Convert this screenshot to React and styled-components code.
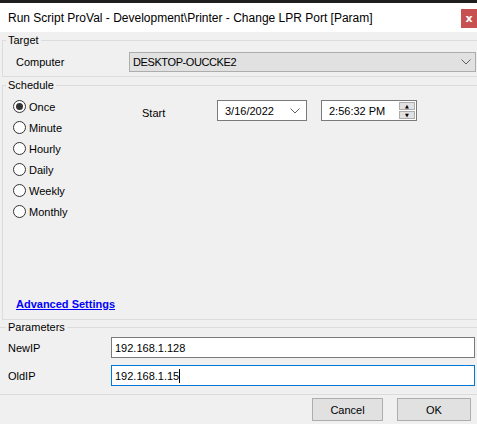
import styled, { createGlobalStyle } from "styled-components";

const GlobalStyle = createGlobalStyle`
  html, body {
    margin: 0;
    padding: 0;
    background: #f0f0f0;
  }
  body {
    font-family: "Liberation Sans", Arial, sans-serif;
    font-size: 11px;
    color: #000;
  }
`;

const radios = ["Once", "Minute", "Hourly", "Daily", "Weekly", "Monthly"];

function Chevron() {
  return (
    <svg width="10" height="6" viewBox="0 0 10 6">
      <polyline points="0.5,0.5 5,5 9.5,0.5" fill="none" stroke="#606060" strokeWidth="1" />
    </svg>
  );
}

export default function App() {
  return (
    <Window>
      <GlobalStyle />
      <TitleBar>
        <Title>Run Script ProVal - Development\Printer - Change LPR Port [Param]</Title>
        <CloseButton>x</CloseButton>
      </TitleBar>

      <Group>
        <Legend>Target</Legend>
        <TargetRow>
          <TargetLabel>Computer</TargetLabel>
          <Combo>
            <ComboText>DESKTOP-OUCCKE2</ComboText>
            <Chevron />
          </Combo>
        </TargetRow>
      </Group>

      <Group>
        <Legend>Schedule</Legend>
        <ScheduleBody>
          <ScheduleTop>
            <RadioList>
              {radios.map((r, i) => (
                <RadioRow key={r}>
                  <RadioCircle $checked={i === 0} />
                  <span>{r}</span>
                </RadioRow>
              ))}
            </RadioList>
            <StartLabel>Start</StartLabel>
            <DateBox>
              <span>3/16/2022</span>
              <Chevron />
            </DateBox>
            <TimeBox>
              <span>2:56:32 PM</span>
              <Spinner>
                <SpinHalf>▲</SpinHalf>
                <SpinHalf>▼</SpinHalf>
              </Spinner>
            </TimeBox>
          </ScheduleTop>
          <AdvancedLink href="#">Advanced Settings</AdvancedLink>
        </ScheduleBody>
      </Group>

      <Group $flat>
        <Legend $flat>Parameters</Legend>
        <ParamList>
          <ParamRow>
            <ParamLabel>NewIP</ParamLabel>
            <TextBox>192.168.1.128</TextBox>
          </ParamRow>
          <ParamRow>
            <ParamLabel>OldIP</ParamLabel>
            <TextBox $focused>
              192.168.1.15
              <Caret />
            </TextBox>
          </ParamRow>
        </ParamList>
      </Group>

      <ButtonRow>
        <Button $w={71}>Cancel</Button>
        <Button $w={74}>OK</Button>
      </ButtonRow>
    </Window>
  );
}

const Window = styled.div`
  width: 477px;
  height: 424px;
  overflow: hidden;
  background: #f0f0f0;
  display: flex;
  flex-direction: column;
`;

const TitleBar = styled.div`
  height: 29px;
  border-top: 3px solid #1f1f1f;
  background: #fff;
  display: flex;
  align-items: center;
  justify-content: space-between;
  padding-left: 8px;
`;

const Title = styled.div`
  font-size: 12px;
  white-space: nowrap;
`;

const CloseButton = styled.div`
  width: 16px;
  height: 19px;
  margin-top: 2px;
  background: #c75050;
  color: #fff;
  font-family: "DejaVu Sans", sans-serif;
  font-weight: bold;
  font-size: 11px;
  display: flex;
  align-items: center;
  justify-content: center;
`;

const Group = styled.fieldset`
  margin: ${(p) => (p.$flat ? "-1px 0 0 0" : "0 0 0 2px")};
  padding: 0;
  min-width: 0;
  border: 1px solid #dcdcdc;
  border-right: none;
  border-left: ${(p) => (p.$flat ? "none" : "1px solid #dcdcdc")};
`;

const Legend = styled.legend`
  padding: 0 2px;
  margin-left: ${(p) => (p.$flat ? "6px" : "3px")};
  line-height: 16px;
  font-size: 11px;
`;

const TargetRow = styled.div`
  display: flex;
  align-items: center;
  padding: 4px 1px 4px 13px;
`;

const TargetLabel = styled.div`
  width: 113px;
`;

const Combo = styled.div`
  flex: 1;
  height: 20px;
  box-sizing: border-box;
  border: 1px solid #adadad;
  background: #e1e1e1;
  display: flex;
  align-items: center;
  justify-content: space-between;
  padding: 0 4px 0 3px;
`;

const ComboText = styled.span`
  letter-spacing: -0.4px;
`;

const ScheduleBody = styled.div`
  height: 226px;
  display: flex;
  flex-direction: column;
  justify-content: space-between;
`;

const ScheduleTop = styled.div`
  display: flex;
  align-items: flex-start;
`;

const RadioList = styled.div`
  width: 129px;
  padding: 3px 0 0 10px;
  display: flex;
  flex-direction: column;
`;

const RadioRow = styled.div`
  height: 21px;
  display: flex;
  align-items: center;
  gap: 3px;
`;

const RadioCircle = styled.span`
  width: 13px;
  height: 13px;
  box-sizing: border-box;
  border: 1px solid #333;
  border-radius: 50%;
  background: #fff;
  display: flex;
  align-items: center;
  justify-content: center;

  &::after {
    content: "";
    display: ${(p) => (p.$checked ? "block" : "none")};
    width: 7px;
    height: 7px;
    border-radius: 50%;
    background: #333;
  }
`;

const StartLabel = styled.div`
  width: 75px;
  margin-top: 14px;
`;

const DateBox = styled.div`
  width: 90px;
  height: 21px;
  margin-top: 7px;
  box-sizing: border-box;
  border: 1px solid #7a7a7a;
  background: #fff;
  display: flex;
  align-items: center;
  justify-content: space-between;
  padding: 0 6px 0 7px;
`;

const TimeBox = styled(DateBox)`
  width: 96px;
  margin-left: 14px;
  padding-right: 1px;
`;

const Spinner = styled.div`
  width: 16px;
  height: 17px;
  display: flex;
  flex-direction: column;
  gap: 1px;
`;

const SpinHalf = styled.div`
  flex: 1;
  box-sizing: border-box;
  border: 1px solid #adadad;
  background: #e1e1e1;
  font-family: "DejaVu Sans", sans-serif;
  font-size: 5px;
  line-height: 6px;
  text-align: center;
  color: #000;
`;

const AdvancedLink = styled.a`
  align-self: flex-start;
  margin: 0 0 7px 13px;
  line-height: 16px;
  font-weight: bold;
  color: #0000ff;
  text-decoration: underline;
`;

const ParamList = styled.div`
  display: flex;
  flex-direction: column;
  gap: 7px;
  padding: 2px 2px 8px 8px;
`;

const ParamRow = styled.div`
  display: flex;
  align-items: center;
`;

const ParamLabel = styled.div`
  width: 103px;
`;

const TextBox = styled.div`
  flex: 1;
  height: 21px;
  box-sizing: border-box;
  border: 1px solid ${(p) => (p.$focused ? "#0078d7" : "#7a7a7a")};
  background: #fff;
  display: flex;
  align-items: center;
  padding-left: 3px;
`;

const Caret = styled.span`
  width: 1px;
  height: 14px;
  background: #000;
`;

const ButtonRow = styled.div`
  display: flex;
  justify-content: flex-end;
  gap: 14px;
  padding: 3px 6px 0 0;
`;

const Button = styled.div`
  width: ${(p) => p.$w}px;
  height: 23px;
  box-sizing: border-box;
  border: 1px solid #adadad;
  background: #e1e1e1;
  display: flex;
  align-items: center;
  justify-content: center;
`;
